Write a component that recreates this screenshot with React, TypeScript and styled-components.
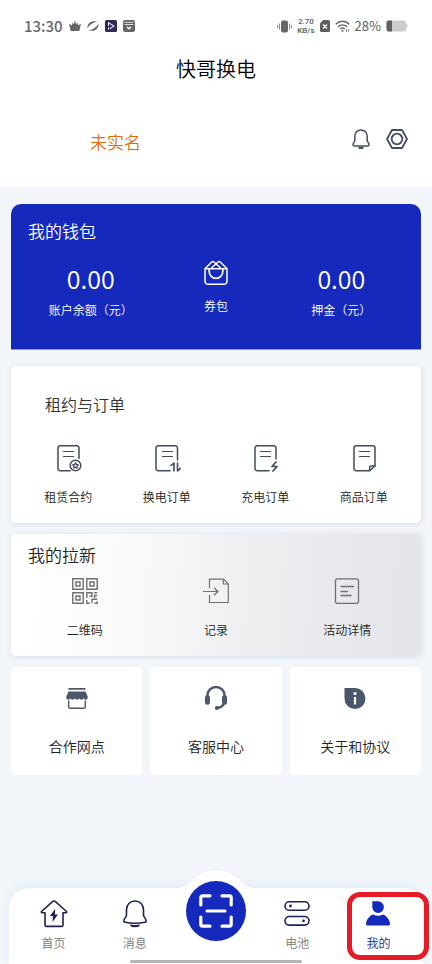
import React from "react";
import styled, { createGlobalStyle } from "styled-components";

const GlobalStyle = createGlobalStyle`
  *, *::before, *::after { box-sizing: border-box; }
  body {
    margin: 0;
    background: #f2f6fa;
    font-family: "Noto Sans CJK SC", "Noto Sans", sans-serif;
    font-weight: 350;
    color: #222;
  }
  button {
    border: 0;
    padding: 0;
    background: none;
    font: inherit;
    color: inherit;
    cursor: pointer;
  }
  h1, h2, p { margin: 0; font-weight: inherit; }
  svg { display: block; flex: none; }
`;

const Page = styled.div`
  position: relative;
  min-height: 100vh;
  display: flex;
  flex-direction: column;
`;

const Header = styled.header`
  background: #fff;
  padding-bottom: 32px;
`;

const StatusBar = styled.div`
  display: flex;
  align-items: center;
  justify-content: space-between;
  height: 52px;
  padding: 0 24px;
  color: #5c5c5c;
`;

const StatusGroup = styled.div<{ $gap: number }>`
  display: flex;
  align-items: center;
  gap: ${(p) => p.$gap}px;
`;

const Clock = styled.span`
  font-size: 15px;
  line-height: 20px;
  font-weight: 500;
  color: #666;
`;

const NetSpeed = styled.span`
  display: flex;
  flex-direction: column;
  align-items: center;
  font-family: Roboto, "Liberation Sans", sans-serif;
  font-size: 8px;
  line-height: 9px;
  font-weight: 500;
`;

const Percent = styled.span`
  font-size: 13px;
  line-height: 20px;
  font-weight: 400;
`;

const Title = styled.h1`
  font-size: 20px;
  line-height: 34px;
  text-align: center;
  color: #000;
`;

const ProfileRow = styled.div`
  display: flex;
  align-items: center;
  justify-content: space-between;
  margin-top: 42px;
  height: 27px;
  padding: 0 24px 0 90px;
`;

const Verify = styled.button`
  font-size: 17px;
  line-height: 24px;
  color: #e46c0e;
`;

const HeaderActions = styled.div`
  display: flex;
  align-items: center;
  align-self: flex-start;
  gap: 16px;
  padding-top: 1px;
`;

const Content = styled.main`
  flex: 1;
  padding: 17px 11px;
  display: flex;
  flex-direction: column;
`;

const Wallet = styled.section`
  background: #152abd;
  color: #fff;
  border-radius: 10px 10px 0 0;
  border-bottom: 1px solid #8791e2;
  padding: 15px 17px 30px;
`;

const SectionTitle = styled.h2<{ $size: number }>`
  font-size: ${(p) => p.$size}px;
  line-height: 24px;
`;

const WalletGrid = styled.div`
  display: grid;
  grid-template-columns: repeat(3, 1fr);
  margin-top: 17px;
`;

const Balance = styled.div`
  display: flex;
  flex-direction: column;
  align-items: center;
  gap: 7px;
  padding-top: 2px;
`;

const Amount = styled.span`
  font-size: 25px;
  line-height: 32px;
`;

const Label = styled.span`
  font-size: 12px;
  line-height: 18px;
  white-space: nowrap;
`;

const Item = styled.button<{ $gap: number }>`
  display: flex;
  flex-direction: column;
  align-items: center;
  gap: ${(p) => p.$gap}px;
`;

const Card = styled.section`
  border-radius: 5px;
  box-shadow: 1px 1px 6px rgba(60, 70, 90, 0.13);
`;

const Orders = styled(Card)`
  background: #fff;
  margin-top: 16px;
  padding: 26px 8px 17px;
  ${SectionTitle} { padding-left: 26px; color: #333; }
`;

const Promo = styled(Card)`
  background: linear-gradient(94deg, #fff 5%, #f9f9fa 32%, #f2f2f4 50%, #eaebee 70%, #e5e6ea 95%);
  margin-top: 11px;
  padding: 9px 8px 17px;
  ${SectionTitle} { padding-left: 9px; }
`;

const ItemGrid = styled.div<{ $columns: number; $top: number }>`
  display: grid;
  grid-template-columns: repeat(${(p) => p.$columns}, 1fr);
  margin-top: ${(p) => p.$top}px;
`;

const Tiles = styled.div`
  display: grid;
  grid-template-columns: repeat(3, 1fr);
  gap: 8px;
  margin-top: 11px;
`;

const Tile = styled.button`
  display: flex;
  flex-direction: column;
  align-items: center;
  gap: 25px;
  padding: 18px 0 19px;
  background: #fff;
  border-radius: 5px;
  font-size: 14px;
  line-height: 20px;
`;

const TabBar = styled.nav`
  position: relative;
  display: grid;
  grid-template-columns: repeat(5, 1fr);
  align-items: start;
  height: 76px;
  margin: 0 9px;
  padding: 0 4px;
  background: #fff;
  border-radius: 20px 20px 0 0;
  box-shadow: 0 -3px 10px rgba(190, 215, 240, 0.3);
`;

const Hump = styled.svg`
  position: absolute;
  left: 50%;
  bottom: 100%;
  margin: 0 0 -1px -39px;
`;

const Tab = styled.button<{ $active?: boolean }>`
  display: flex;
  flex-direction: column;
  align-items: center;
  gap: 6px;
  padding-top: 12px;
  color: ${(p) => (p.$active ? "#14249c" : "#777")};
`;

const ScanButton = styled.button`
  position: relative;
  display: grid;
  place-items: center;
  justify-self: center;
  width: 60px;
  height: 60px;
  margin-top: -7px;
  border-radius: 50%;
  background: #152abd;
`;

const HomeIndicator = styled.div`
  position: absolute;
  left: 30%;
  right: 30%;
  bottom: 1px;
  height: 3px;
  border-radius: 2px;
  background: #b5b5b5;
`;

const Highlight = styled.div`
  position: absolute;
  right: 3px;
  bottom: 4px;
  width: 82px;
  height: 68px;
  border: 5px solid #e51c25;
  border-radius: 13px;
  pointer-events: none;
`;

const Crown = () => (
  <svg width="12" height="12" viewBox="0 0 12 12" fill="#666">
    <path d="M0 3.500 3 5.500 3.200 2.500 4.700 4.500 6 .5l1.300 4 1.500-2L9 5.500l3-2L10.300 11H1.700Z" />
  </svg>
);
const Swirl = () => (
  <svg width="12" height="12" viewBox="0 0 13 12" fill="#666">
    <path d="M.5 8.500C0 4 3.500.8 7 .8c2 0 3.500.5 4.800.7C8 1.700 3 4 .5 8.500ZM12.500 3.200C13 7.500 9.500 11.200 6 11.200c-2 0-3.500-.4-4.800-.8C5 10.300 10 8 12.500 3.200Z" />
  </svg>
);
const PlayBadge = () => (
  <svg width="12" height="12" viewBox="0 0 12 12">
    <rect width="12" height="12" rx="1.500" fill="#2d2a55" />
    <path d="M3.500 6V2.700L9 6 4.800 8.700M3.500 7.500v2" fill="none" stroke="#e8e8f4" strokeWidth="1.100" />
  </svg>
);
const Pocket = () => (
  <svg width="12" height="12" viewBox="0 0 12 12">
    <rect width="12" height="12" rx="2" fill="#666" />
    <path d="M1.500 2.300h9M1.500 4.500h9" stroke="#ddd" strokeWidth="1" />
    <path d="M4 7l2 1.800L8 7" fill="none" stroke="#fff" strokeWidth="1.500" />
  </svg>
);
const Vibrate = () => (
  <svg width="15" height="13" viewBox="0 0 15 13" fill="none" stroke="#888">
    <rect x="4" y=".5" width="7" height="12" rx="2" fill="#666" stroke="none" />
    <path d="M2.500 3.500v6M.6 5v3M12.500 3.500v6M14.400 5v3" />
  </svg>
);
const SimOff = () => (
  <svg width="10" height="12" viewBox="0 0 10 12">
    <path d="M3.200 0H8.500A1.500 1.500 0 0 1 10 1.500v9A1.500 1.500 0 0 1 8.500 12h-7A1.500 1.500 0 0 1 0 10.500V3.200Z" fill="#5f5f5f" />
    <path d="m3 4.500 4 4m0-4-4 4" stroke="#fff" strokeWidth="1.300" />
  </svg>
);
const Wifi = () => (
  <svg width="15" height="13" viewBox="0 0 16 13" fill="none" stroke="#666" strokeWidth="1.600">
    <path d="M.8 4.200C5-.1 11-.1 15.200 4.200M3.200 6.800c2.800-2.700 6.800-2.700 9.600 0M5.500 9.200c1.500-1.400 3.500-1.400 5 0" />
    <path d="M6.300 10.400h3.400L8 12.500Z" fill="#666" stroke="none" />
    <path d="M12.300 12V9.500M14.500 12V9.500" strokeWidth="1" />
  </svg>
);
const Battery = () => (
  <svg width="22" height="12" viewBox="0 0 22 12">
    <path d="M3 .5h14.500A2.500 2.500 0 0 1 20 3v1l1.500 1v2L20 8v1a2.500 2.500 0 0 1-2.500 2.500H3A2.500 2.500 0 0 1 .5 9V3A2.500 2.500 0 0 1 3 .5Z" fill="#ccc" />
    <path d="M6 .5H3A2.500 2.500 0 0 0 .5 3v6A2.500 2.500 0 0 0 3 11.500h3Z" fill="#5f5f5f" />
  </svg>
);

const HeaderBell = () => (
  <svg width="18" height="20" viewBox="0 0 18 20" fill="none" stroke="#424e60" strokeWidth="1.500" strokeLinejoin="round">
    <path d="M9 .9c-3.700 0-6.200 2.800-6.200 6.300v4.300c0 1.500-1.800 2.300-1.800 4 0 1 .6 1.500 1.500 1.500h13c.9 0 1.500-.5 1.500-1.500 0-1.700-1.800-2.500-1.800-4V7.200C15.200 3.700 12.700.9 9 .9Z" />
    <path d="M6.500 18.300c1.500.9 3.500.9 5 0" strokeWidth="2" />
  </svg>
);
const HexNut = () => (
  <svg width="22" height="20" viewBox="0 0 22 20" fill="none" stroke="#424e60" strokeWidth="1.800" strokeLinejoin="round">
    <path d="M6 1h10l5 9-5 9H6L1 10Z" />
    <circle cx="11" cy="10" r="5.300" />
  </svg>
);
const CouponBag = () => (
  <svg width="26" height="26" viewBox="0 0 26 26" fill="none" stroke="#fff" strokeWidth="1.500" strokeLinejoin="round" strokeLinecap="round">
    <path d="M2 8.700h22v12.600a3 3 0 0 1-3 3H5a3 3 0 0 1-3-3V8.700L8.500 2.200c.8-.8 1.900-.8 2.700 0L17.500 8M24 8.700l-6.500-6.500c-.8-.8-1.900-.8-2.700 0L8.500 8" />
    <path d="M6.200 9v2.500a6.800 6.800 0 0 0 13.600 0V9" strokeWidth="1.700" />
  </svg>
);

type DocKind = "contract" | "swap" | "charge" | "goods";
const OrderDoc = ({ kind }: { kind: DocKind }) => (
  <svg width="28" height="27" viewBox="0 0 28 27" fill="none" stroke="#424c5d" strokeWidth="1.500" strokeLinecap="round" strokeLinejoin="round">
    <path d="M9.500 6.500h10M9.500 11.500h10" strokeWidth="1.200" />
    {kind === "contract" && (
      <>
        <path d="M25 13.500V3a2.200 2.200 0 0 0-2.200-2.200H6.200A2.200 2.200 0 0 0 4 3v20.500a2.200 2.200 0 0 0 2.200 2.200h10" />
        <circle cx="21.500" cy="20.500" r="5.300" />
        <path d="m21.500 17.800 .9 1.700 1.900.3-1.400 1.400.3 1.900-1.700-.9-1.700.9.300-1.900-1.400-1.400 1.900-.3Z" strokeWidth="1.300" />
      </>
    )}
    {kind === "swap" && (
      <>
        <path d="M24.500 15V3a2.200 2.200 0 0 0-2.200-2.200H5.200A2.200 2.200 0 0 0 3 3v20.500a2.200 2.200 0 0 0 2.200 2.200H17" />
        <path d="m18 20.500 3-2.500v8M24.500 18v8l2.800-2.700" strokeWidth="1.600" />
      </>
    )}
    {kind === "charge" && (
      <>
        <path d="M25 14V3a2.200 2.200 0 0 0-2.200-2.200H6.200A2.200 2.200 0 0 0 4 3v20.500a2.200 2.200 0 0 0 2.200 2.200H18" />
        <path d="m25 17-4 4.500h5L22 26" strokeWidth="1.700" />
      </>
    )}
    {kind === "goods" && (
      <>
        <path d="M19.500 25.700H6.200A2.200 2.200 0 0 1 4 23.500V3A2.200 2.200 0 0 1 6.200.8h16.600A2.200 2.200 0 0 1 25 3v18Z" />
        <path d="M19.700 25.500v-3.300a1.200 1.200 0 0 1 1.200-1.200H25" />
      </>
    )}
  </svg>
);

const QrCode = () => (
  <svg width="26" height="26" viewBox="0 0 26 26" fill="none" stroke="#707074" strokeWidth="1.400">
    <path d="M.8.800h10.400v10.400H.8ZM14.800.8h10.400v10.400H14.800ZM.8 14.800h10.400v10.400H.8Z" />
    <path d="M4 4h4v4H4ZM18 4h4v4h-4ZM4 18h4v4H4Z" />
    <path d="M14.800 20v-5.200H20v3.500h-2.500M22 14.800h3.200M25.200 17.500H22.500v2.500M14.800 22v3.200h3M20 25.200v-4h5.200M22.500 25.200h2.700v-2" />
  </svg>
);
const Record = () => (
  <svg width="26" height="26" viewBox="0 0 26 26" fill="none" stroke="#707074" strokeWidth="1.200">
    <path d="M6.500 10V1.200h14l4.800 4.800v18.500H6.500V17M20.300 1.200V6h5M0 13.500h15M11 9.800l4 3.700-4 3.700" />
  </svg>
);
const Details = () => (
  <svg width="26" height="26" viewBox="0 0 26 26" fill="none" stroke="#707074" strokeWidth="1.300">
    <rect x="1.500" y=".8" width="23" height="24.600" rx="2" />
    <path d="M6.500 8.500H20M6.500 13.500h7.500M6.500 17.500h11" />
  </svg>
);

const Store = () => (
  <svg width="26" height="26" viewBox="0 0 26 26" fill="#4b586b">
    <path d="M4.500 3h17v1.800h-17ZM4.500 6.500h17l2.200 5v1.200c0 1.200-1 2-2 2-1.200 0-2.200-.8-2.200-1.600 0 1-1 1.700-2.200 1.700s-2.200-.7-2.200-1.700c0 1-1 1.700-2.100 1.700s-2.200-.7-2.200-1.700c0 1-1 1.700-2.200 1.700s-2.200-.7-2.200-1.700c0 .8-.9 1.600-2.100 1.600-1 0-2-.8-2-2V11.500Z" />
    <path d="M4.700 15.500v6.500c0 .8.400 1.200 1.200 1.200h14.200c.8 0 1.200-.4 1.200-1.200v-6.500" fill="none" stroke="#4b586b" strokeWidth="1.400" />
  </svg>
);
const Headset = () => (
  <svg width="26" height="26" viewBox="0 0 26 26" fill="none" stroke="#4b586b">
    <path d="M4.500 12v-1.500a8.500 8.500 0 0 1 17 0V12M21.500 17c-.8 3.500-3.500 5.600-7.500 6" strokeWidth="2.500" />
    <path d="M4.500 12.700v4.500M21.500 12.700v4.500" strokeWidth="5" strokeLinecap="round" />
    <circle cx="13.800" cy="23" r="2" fill="#4b586b" stroke="none" />
  </svg>
);
const Info = () => (
  <svg width="26" height="26" viewBox="0 0 26 26">
    <path d="M2.500 3H13A10.500 10.500 0 1 1 2.500 13.500Z" fill="#4b586b" />
    <circle cx="13" cy="8.500" r="1.600" fill="#fff" />
    <path d="M13 12v7.500" stroke="#fff" strokeWidth="2.200" />
  </svg>
);

const HomeIcon = () => (
  <svg width="28" height="28" viewBox="0 0 28 28" fill="none" stroke="#1b2550" strokeWidth="1.600" strokeLinejoin="round">
    <path d="M12.500 1.700c.9-.8 2.100-.8 3 0L26.500 11.500c.5.500.2 1.200-.5 1.200h-3V25c0 .9-.5 1.400-1.400 1.400H6.400C5.500 26.400 5 25.900 5 25V12.700H2c-.7 0-1-.7-.5-1.200Z" />
    <path d="m15 9-5 7h3l-.5 6 5.500-7.500h-3Z" fill="#1b2550" stroke="none" />
  </svg>
);
const MessageIcon = () => (
  <svg width="28" height="28" viewBox="0 0 28 28" fill="none" stroke="#1b2550" strokeWidth="1.600" strokeLinejoin="round">
    <path d="M14 1C9 1 5.500 4.800 5.500 9.500V15c0 2-2.700 3.500-2.700 6 0 .8.500 1.200 1.200 1.300 6.500 1.300 13.500 1.300 20 0 .7-.1 1.200-.5 1.200-1.300 0-2.500-2.700-4-2.700-6V9.500C22.500 4.800 19 1 14 1Z" />
    <path d="M10 25.300c2.500.7 5.500.7 8 0-1 1.600-7 1.600-8 0Z" />
  </svg>
);
const BatteryIcon = () => (
  <svg width="28" height="28" viewBox="0 0 28 28" fill="none" stroke="#1d2358" strokeWidth="1.600">
    <rect x="2" y="1.700" width="24" height="8.600" rx="4.300" />
    <rect x="2" y="16.500" width="24" height="8.600" rx="4.300" />
    <circle cx="7.500" cy="6" r="1.400" fill="#1d2358" stroke="none" />
    <circle cx="20.500" cy="20.800" r="1.400" fill="#1d2358" stroke="none" />
  </svg>
);
const MeIcon = () => (
  <svg width="28" height="28" viewBox="0 0 28 28" fill="#152abd">
    <path d="M8.300 1.300H14a5.800 5.800 0 1 1-5.700 5.800Z" />
    <path d="M9 14.500c3 1.700 7 1.700 10 0 3.500 1 7 5.500 7 9.500 0 1-.6 1.400-1.500 1.400h-21C2.600 25.400 2 25 2 24c0-4 3.500-8.500 7-9.500Z" />
  </svg>
);
const ScanIcon = () => (
  <svg width="36" height="36" viewBox="0 0 36 36" fill="none" stroke="#fff" strokeWidth="3.200" strokeLinecap="round" strokeLinejoin="round">
    <path d="M2.800 12V4.500a1.700 1.700 0 0 1 1.700-1.700H12M24 2.800h7.500a1.700 1.700 0 0 1 1.700 1.700V12M33.200 24v7.500a1.700 1.700 0 0 1-1.700 1.700H24M12 33.200H4.500a1.700 1.700 0 0 1-1.700-1.700V24M9 18h18" />
  </svg>
);

const orders: { label: string; kind: DocKind }[] = [
  { label: "租赁合约", kind: "contract" },
  { label: "换电订单", kind: "swap" },
  { label: "充电订单", kind: "charge" },
  { label: "商品订单", kind: "goods" },
];
const promos = [
  { label: "二维码", Icon: QrCode },
  { label: "记录", Icon: Record },
  { label: "活动详情", Icon: Details },
];
const services = [
  { label: "合作网点", Icon: Store },
  { label: "客服中心", Icon: Headset },
  { label: "关于和协议", Icon: Info },
];

export default function App() {
  return (
    <Page>
      <GlobalStyle />
      <Header>
        <StatusBar>
          <StatusGroup $gap={6}>
            <Clock>13:30</Clock>
            <Crown />
            <Swirl />
            <PlayBadge />
            <Pocket />
          </StatusGroup>
          <StatusGroup $gap={5}>
            <Vibrate />
            <NetSpeed>
              <span>2.70</span>
              <span>KB/s</span>
            </NetSpeed>
            <SimOff />
            <Wifi />
            <Percent>28%</Percent>
            <Battery />
          </StatusGroup>
        </StatusBar>
        <Title>快哥换电</Title>
        <ProfileRow>
          <Verify>未实名</Verify>
          <HeaderActions>
            <button aria-label="通知"><HeaderBell /></button>
            <button aria-label="设置"><HexNut /></button>
          </HeaderActions>
        </ProfileRow>
      </Header>

      <Content>
        <Wallet>
          <SectionTitle $size={17}>我的钱包</SectionTitle>
          <WalletGrid>
            <Balance>
              <Amount>0.00</Amount>
              <Label>账户余额（元）</Label>
            </Balance>
            <Item $gap={11}>
              <CouponBag />
              <Label>券包</Label>
            </Item>
            <Balance>
              <Amount>0.00</Amount>
              <Label>押金（元）</Label>
            </Balance>
          </WalletGrid>
        </Wallet>

        <Orders>
          <SectionTitle $size={16}>租约与订单</SectionTitle>
          <ItemGrid $columns={4} $top={29}>
            {orders.map((o) => (
              <Item key={o.kind} $gap={16}>
                <OrderDoc kind={o.kind} />
                <Label>{o.label}</Label>
              </Item>
            ))}
          </ItemGrid>
        </Orders>

        <Promo>
          <SectionTitle $size={17}>我的拉新</SectionTitle>
          <ItemGrid $columns={3} $top={11}>
            {promos.map(({ label, Icon }) => (
              <Item key={label} $gap={17}>
                <Icon />
                <Label>{label}</Label>
              </Item>
            ))}
          </ItemGrid>
        </Promo>

        <Tiles>
          {services.map(({ label, Icon }) => (
            <Tile key={label}>
              <Icon />
              <span>{label}</span>
            </Tile>
          ))}
        </Tiles>
      </Content>

      <TabBar>
        <Hump width="78" height="18" viewBox="0 0 78 18" aria-hidden="true">
          <path d="M0 17C8 17 11 13 17 8 24 2 31 0 39 0s15 2 22 8c6 5 9 9 17 9v1H0Z" fill="#fff" />
        </Hump>
        <Tab><HomeIcon /><Label>首页</Label></Tab>
        <Tab><MessageIcon /><Label>消息</Label></Tab>
        <ScanButton aria-label="扫码"><ScanIcon /></ScanButton>
        <Tab><BatteryIcon /><Label>电池</Label></Tab>
        <Tab $active aria-current="page"><MeIcon /><Label>我的</Label></Tab>
      </TabBar>
      <HomeIndicator />
      <Highlight />
    </Page>
  );
}
